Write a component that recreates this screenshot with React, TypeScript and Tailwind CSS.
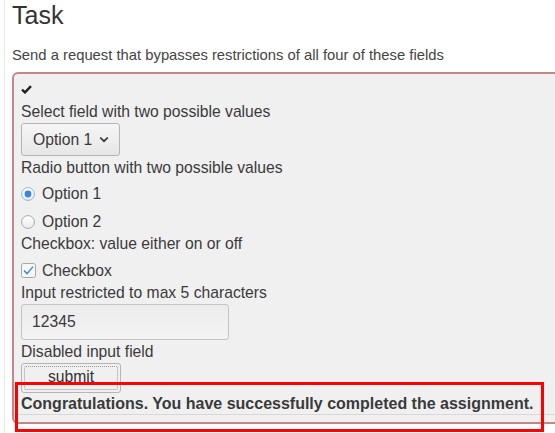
import React from "react";

function Radio({ checked }: { checked?: boolean }) {
  return (
    <svg width="14" height="14" viewBox="0 0 14 14" className="mr-[7px] -mt-[1px] shrink-0">
      <defs>
        <linearGradient id="rg" x1="0" y1="0" x2="0" y2="1">
          <stop offset="0" stopColor="#ffffff" />
          <stop offset="1" stopColor="#ececec" />
        </linearGradient>
      </defs>
      <circle cx="7" cy="7" r="6.4" fill="url(#rg)" stroke={checked ? "#8fb3dd" : "#a8a8a8"} strokeWidth="1" />
      {checked && <circle cx="7" cy="7" r="3.4" fill="#3d86d6" />}
    </svg>
  );
}

function Checkbox() {
  return (
    <svg width="15" height="15" viewBox="0 0 15 15" className="mr-[6px] -mt-[2px] shrink-0">
      <rect x="0.5" y="0.5" width="14" height="14" rx="2" fill="#f7f7f7" stroke="#a8a8a8" />
      <path d="M3 7.6 L6 10.6 L12 3.6" fill="none" stroke="#3d86d6" strokeWidth="1.4" />
    </svg>
  );
}

export default function App() {
  return (
    <div className="w-[555px] h-[433px] overflow-hidden bg-white relative font-['Liberation_Sans',Arial,sans-serif] text-[#333]">
      <div className="ml-[4px] h-full border-l border-[#e8e8e8] pl-[7px]">
        <h1 className="pt-[1px] text-[25px] leading-[28px] font-normal text-[#333]">Task</h1>
        <p className="mt-[16px] text-[14.8px] leading-[20px] text-[#444]">
          Send a request that bypasses restrictions of all four of these fields
        </p>
        <div className="mt-[7px] w-[600px] rounded-[6px] border-2 border-[#c48787] bg-[#f0f0f0] text-[15.7px] leading-[20px] text-[#3a3a3a]">
          <div className="pl-[7px]">
            <div className="h-[29px] pt-[11px]">
              <svg width="11" height="9" viewBox="0 0 11 9">
                <path d="M1 4.6 L4 7.4 L10 1.2" fill="none" stroke="#222" strokeWidth="2.4" />
              </svg>
            </div>
            <div className="-mt-[1px]">Select field with two possible values</div>
            <div className="mt-[1px] flex h-[33px] w-[99px] items-center rounded-[3px] border border-[#b5b5b5] bg-gradient-to-b from-[#f6f6f6] to-[#e6e6e6] pl-[11px]">
              <span>Option 1</span>
              <svg width="10" height="7" viewBox="0 0 10 7" className="ml-[7px]">
                <path d="M1.2 1.5 L5 5.2 L8.8 1.5" fill="none" stroke="#333" strokeWidth="1.7" />
              </svg>
            </div>
            <div className="mt-[2px]">Radio button with two possible values</div>
            <div className="mt-[6px] flex items-center">
              <Radio checked />
              <span>Option 1</span>
            </div>
            <div className="mt-[8px] flex items-center">
              <Radio />
              <span>Option 2</span>
            </div>
            <div className="mt-[2px]">Checkbox: value either on or off</div>
            <div className="mt-[7px] flex items-center">
              <Checkbox />
              <span>Checkbox</span>
            </div>
            <div className="mt-[2px]">Input restricted to max 5 characters</div>
            <div className="mt-[1px] flex h-[36px] w-[208px] items-center rounded-[3px] border border-[#c4c4c4] bg-gradient-to-b from-[#ececec] to-[#f3f3f3] pl-[10px]">
              12345
            </div>
            <div className="mt-[2px]">Disabled input field</div>
            <div className="mt-[1px] h-[30px] w-[100px] rounded-[3px] border border-[#b5b5b5] bg-[#f0f0f0] p-[2px]">
              <div className="flex h-full w-full items-center justify-center rounded-[2px] border border-dotted border-[#9a9a9a] pb-[2px] text-[#333]">
                submit
              </div>
            </div>
          </div>
          <div className="mt-[1px] h-[21px] border-b border-[#d8d8d8] pl-[7px] text-[16px] font-bold text-[#3a3a3a]">
            Congratulations. You have successfully completed the assignment.
          </div>
          <div className="h-[7px]" />
        </div>
      </div>
      <div className="absolute left-[15px] top-[382px] h-[50px] w-[529px] border-[3px] border-[#ff0000]" />
    </div>
  );
}
